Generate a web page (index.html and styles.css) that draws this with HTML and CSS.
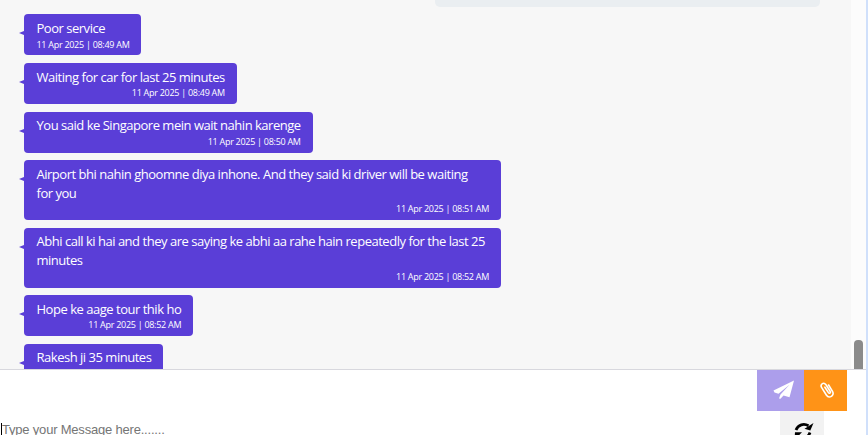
FILE: index.html
```html
<!DOCTYPE html>
<html lang="en">
<head>
  <meta charset="UTF-8" />
  <meta name="viewport" content="width=device-width, initial-scale=1.0"/>
  <title>Chat</title>
  <link rel="stylesheet" href="styles.css">
</head>
<body>
  <div class="page">
    <div class="chat">
      <div class="messages">
        <div class="sent"></div>
        <div class="message">
          <div class="text">Poor service</div>
          <div class="time">11 Apr 2025 | 08:49 AM</div>
        </div>
        <div class="message">
          <div class="text">Waiting for car for last 25 minutes</div>
          <div class="time">11 Apr 2025 | 08:49 AM</div>
        </div>
        <div class="message">
          <div class="text">You said ke Singapore mein wait nahin karenge</div>
          <div class="time">11 Apr 2025 | 08:50 AM</div>
        </div>
        <div class="message wide">
          <div class="text">Airport bhi nahin ghoomne diya inhone. And they said ki driver will be waiting<br>for you</div>
          <div class="time">11 Apr 2025 | 08:51 AM</div>
        </div>
        <div class="message wide">
          <div class="text">Abhi call ki hai and they are saying ke abhi aa rahe hain repeatedly for the last 25<br>minutes</div>
          <div class="time">11 Apr 2025 | 08:52 AM</div>
        </div>
        <div class="message">
          <div class="text">Hope ke aage tour thik ho</div>
          <div class="time">11 Apr 2025 | 08:52 AM</div>
        </div>
        <div class="message last">
          <div class="text">Rakesh ji 35 minutes</div>
        </div>
      </div>
      <div class="scrollbar"><div class="thumb"></div></div>
    </div>

    <div class="composer">
      <div class="input">
        <span class="caret"></span>
        <span class="placeholder">Type your Message here.......</span>
      </div>
      <div class="actions">
        <div class="buttons">
          <div class="btn send">
            <svg width="22" height="20" viewBox="0 0 22 20">
              <path d="M21 0.5 L0.5 10.5 L1.5 12.5 L5.5 13.8 L16.5 4.8 L7.5 14.5 L6 18.5 L7.5 18.8 L10.5 15.6 L16.5 17.3 Z" fill="#fff"/>
            </svg>
          </div>
          <div class="btn attach">
            <svg width="15" height="18" viewBox="0 0 15 18">
              <path d="M4.9 6.2 L8.4 11.6 C9.3 12.9 11 11.9 10.2 10.5 L6.2 4 C4.2 0.4 -0.4 3.2 1.7 6.7 L6.3 14 C9 18.2 15 14.6 12.5 10.4 L8.6 4" fill="none" stroke="#fff" stroke-width="1.6" stroke-linecap="round"/>
            </svg>
          </div>
        </div>
        <div class="refresh">
          <svg width="20" height="19" viewBox="0 0 20 19">
            <path d="M2 8 C4 2.5 10 1 14.5 3.8" fill="none" stroke="#000" stroke-width="2.8"/>
            <path d="M19.5 1 L16.3 8.5 L10.5 6.8 Z"/>
            <path d="M16 10.5 C14 16 9 18 5 15" fill="none" stroke="#000" stroke-width="2.8"/>
            <path d="M0.5 18 L1 10.2 L8 10.2 Z"/>
          </svg>
        </div>
      </div>
    </div>
  </div>
</body>
</html>
```
FILE: styles.css
```css
* {
  box-sizing: border-box;
}
body {
  margin: 0;
  height: 435px;
  overflow: hidden;
  font-family: 'Open Sans', sans-serif;
  background: #fff;
}
.page {
  height: 435px;
  border-right: 2px solid #d0e0fb;
}
.chat {
  display: flex;
  height: 370px;
  background: #f7f7f7;
  border-bottom: 1px solid #d8d8de;
}
.messages {
  flex: 1;
  display: flex;
  flex-direction: column;
  align-items: flex-start;
  gap: 7.57px;
  padding-left: 24px;
  overflow: hidden;
}
.sent {
  flex: none;
  align-self: flex-end;
  width: 385px;
  height: 6.89px;
  margin-right: 31px;
  background: #eaeef1;
  border-radius: 0 0 5px 5px;
}
.message {
  position: relative;
  flex: none;
  padding: 4.6px 12px 4.8px 12.5px;
  color: #fff;
  background: #5a3ed7;
  border-radius: 4px;
}
.message::before {
  content: "";
  position: absolute;
  left: -5px;
  top: 17px;
  border: solid transparent;
  border-width: 2.5px 5px 2.5px 0;
  border-right-color: #5a3ed7;
}
.wide {
  width: 477px;
}
.last {
  padding-bottom: 17px;
}
.text {
  font-size: 13px;
  line-height: 19px;
  letter-spacing: -0.48px;
  white-space: nowrap;
}
.time {
  margin-top: 0.6px;
  font-size: 9px;
  font-weight: 500;
  line-height: 12px;
  letter-spacing: -0.28px;
  text-align: right;
  white-space: nowrap;
}
.scrollbar {
  display: flex;
  align-items: flex-end;
  justify-content: center;
  width: 15px;
  padding-right: 1px;
  background: #fcfcfc;
}
.thumb {
  width: 9px;
  height: 29px;
  background: #8b8b8b;
  border-radius: 4px 4px 0 0;
}
.composer {
  display: flex;
  justify-content: space-between;
  height: 65px;
  overflow: hidden;
}
.input {
  display: flex;
  padding: 53px 0 0 1px;
  font: 13px/14px 'Liberation Sans', Arial, sans-serif;
  color: #757575;
}
.caret {
  width: 1px;
  height: 12px;
  background: #000;
}
.placeholder {
  height: 12px;
  letter-spacing: -0.2px;
  white-space: nowrap;
}
.actions {
  width: 90px;
  margin-right: 19px;
}
.buttons {
  display: flex;
}
.btn {
  height: 41px;
}
.send {
  width: 47px;
  padding: 10px 0 0 16px;
  background: #ac9eeb;
}
.attach {
  width: 43px;
  padding: 11px 0 0 16px;
  background: #ff9317;
}
.refresh {
  width: 44px;
  height: 44px;
  margin-left: 23px;
  padding: 11px 0 0 14px;
  background: #f2f2f2;
}
```
